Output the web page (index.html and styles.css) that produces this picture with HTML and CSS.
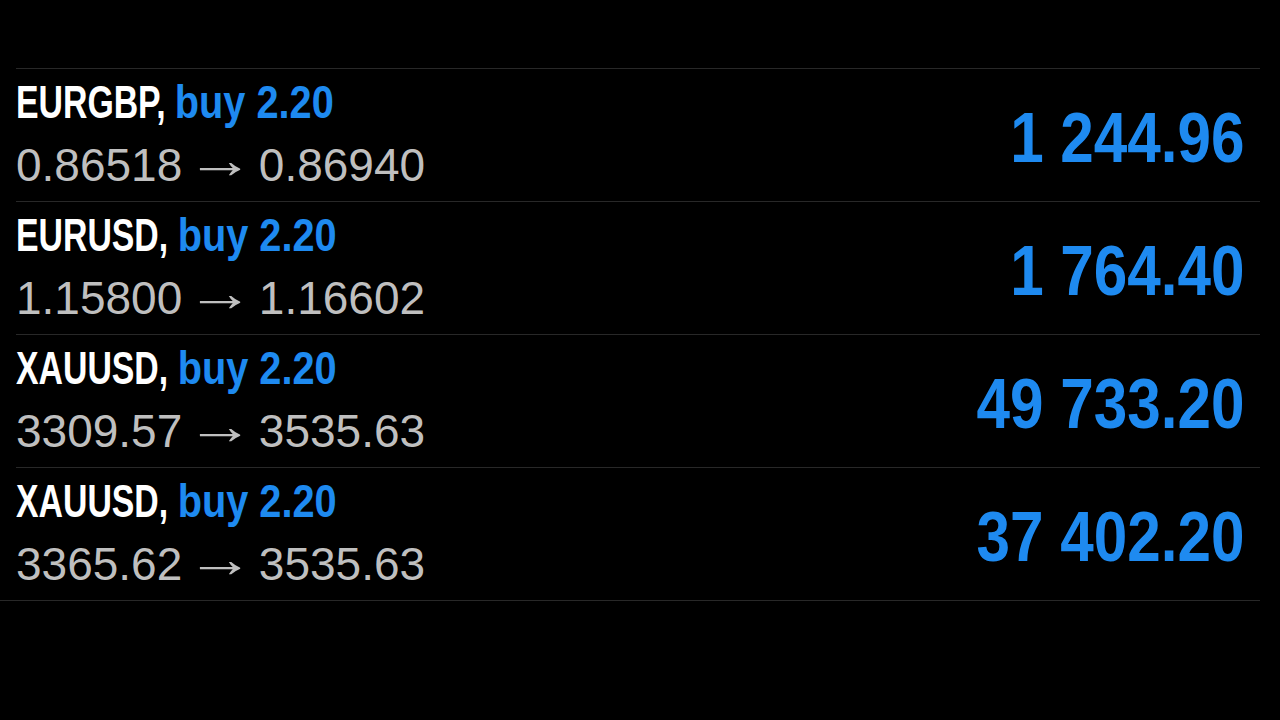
FILE: index.html
```html
<!DOCTYPE html>
<html lang="en">
<head>
<meta charset="utf-8">
<title>Positions</title>
<link rel="stylesheet" href="styles.css">
</head>
<body>
<div class="screen">
  <div class="list">
    <div class="row">
      <div class="info">
        <div class="title"><span class="sym">EURGBP,</span> <span class="side">buy 2.20</span></div>
        <div class="prices">0.86518 <span class="arrow">→</span> 0.86940</div>
      </div>
      <div class="profit">1 244.96</div>
    </div>
    <div class="row">
      <div class="info">
        <div class="title"><span class="sym">EURUSD,</span> <span class="side">buy 2.20</span></div>
        <div class="prices">1.15800 <span class="arrow">→</span> 1.16602</div>
      </div>
      <div class="profit">1 764.40</div>
    </div>
    <div class="row">
      <div class="info">
        <div class="title"><span class="sym">XAUUSD,</span> <span class="side">buy 2.20</span></div>
        <div class="prices">3309.57 <span class="arrow">→</span> 3535.63</div>
      </div>
      <div class="profit">49 733.20</div>
    </div>
    <div class="row">
      <div class="info">
        <div class="title"><span class="sym">XAUUSD,</span> <span class="side">buy 2.20</span></div>
        <div class="prices">3365.62 <span class="arrow">→</span> 3535.63</div>
      </div>
      <div class="profit">37 402.20</div>
    </div>
    <div class="list-end"></div>
  </div>
</div>
</body>
</html>
```

FILE: styles.css
```css
html, body {
  margin: 0;
  padding: 0;
  background: #000;
}

.screen {
  width: 1280px;
  height: 720px;
  background: #000;
  padding-top: 68px;
  box-sizing: border-box;
  font-family: "Liberation Sans", Arial, sans-serif;
}

.list {
  margin-left: 16px;
  width: 1244px;
}

.row {
  display: flex;
  justify-content: space-between;
  align-items: center;
  border-top: 1px solid #282828;
  padding: 10px 16px 13px 0;
}

.info {
  display: flex;
  flex-direction: column;
  min-width: 0;
}

.title {
  font-size: 46px;
  line-height: 46px;
  font-weight: 700;
  white-space: nowrap;
  transform: scaleX(0.735);
  transform-origin: left center;
}

.sym {
  color: #ffffff;
}

.side {
  display: inline-block;
  color: #1e8af0;
  transform: scaleX(1.175);
  transform-origin: left center;
}

.prices {
  margin-top: 17px;
  height: 46px;
  font-size: 46px;
  line-height: 46px;
  color: #bfbfbf;
  white-space: nowrap;
  word-spacing: -10px;
}

.arrow {
  display: inline-block;
  line-height: 46px;
  word-spacing: 0;
  margin-left: 12px;
  margin-right: 13px;
  transform: translateY(-5px) scale(1.48, 1.15);
  transform-origin: center 28px;
}

.profit {
  margin-top: 9px;
  font-size: 70px;
  line-height: 70px;
  font-weight: 700;
  color: #1e8af0;
  white-space: nowrap;
  transform: scaleX(0.86);
  transform-origin: right center;
}

.list-end {
  margin-left: -16px;
  width: 1260px;
  border-top: 1px solid #282828;
}
```
